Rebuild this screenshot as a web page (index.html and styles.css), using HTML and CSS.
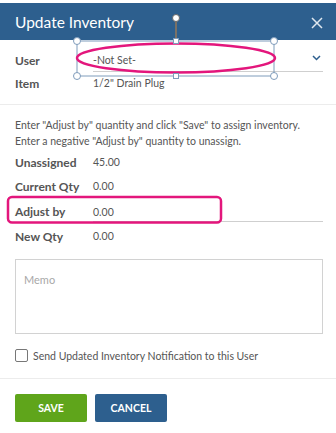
FILE: index.html
```html
<!DOCTYPE html>
<html>
<head>
<meta charset="utf-8">
<link rel="stylesheet" href="styles.css">
</head>
<body>
<div class="modal">
  <div class="header">
    <span class="title">Update Inventory</span>
    <svg class="close" width="12" height="12" viewBox="0 0 12 12"><path d="M1 1L11 11M11 1L1 11" stroke="#dfe7ef" stroke-width="1.5" fill="none"/></svg>
  </div>
  <div class="top">
    <div class="row user-row">
      <span class="label">User</span>
      <div class="field select">
        <span class="value">-Not Set-</span>
        <svg class="chev" width="9" height="6" viewBox="0 0 9 6"><path d="M1 1L4.5 4.5L8 1" stroke="#2d5f8e" stroke-width="1.5" fill="none"/></svg>
      </div>
    </div>
    <div class="row item-row">
      <span class="label">Item</span>
      <span class="value">1/2" Drain Plug</span>
    </div>
  </div>
  <div class="body">
    <p class="instr">Enter "Adjust by" quantity and click "Save" to assign inventory.<br>Enter a negative "Adjust by" quantity to unassign.</p>
    <div class="row qrow"><span class="label">Unassigned</span><span class="value">45.00</span></div>
    <div class="row qrow"><span class="label">Current Qty</span><span class="value">0.00</span></div>
    <div class="row qrow adj"><span class="label">Adjust by</span><div class="field input"><span class="value">0.00</span></div></div>
    <div class="row qrow"><span class="label">New Qty</span><span class="value">0.00</span></div>
    <div class="memo"><span class="ph">Memo</span></div>
    <label class="check"><span class="box"></span><span class="ctext">Send Updated Inventory Notification to this User</span></label>
  </div>
  <div class="footer">
    <button class="btn save">SAVE</button>
    <button class="btn cancel">CANCEL</button>
  </div>
</div>
<svg class="overlay" width="336" height="433" viewBox="0 0 336 433">
  <line x1="176" y1="21" x2="176" y2="41" stroke="#c8843e" stroke-width="1"/>
  <rect x="77" y="41" width="197" height="35" fill="none" stroke="#7f9cbb" stroke-width="1"/>
  <ellipse cx="176" cy="58" rx="99" ry="14.5" fill="none" stroke="#e3167c" stroke-width="2.5"/>
  <circle cx="176" cy="18" r="3.5" fill="#fff" stroke="#666" stroke-width="1"/>
  <circle cx="77" cy="41" r="3.5" fill="#fff" stroke="#7f9cbb" stroke-width="1"/>
  <circle cx="274" cy="41" r="3.5" fill="#fff" stroke="#7f9cbb" stroke-width="1"/>
  <circle cx="77" cy="76" r="3.5" fill="#fff" stroke="#7f9cbb" stroke-width="1"/>
  <circle cx="274" cy="76" r="3.5" fill="#fff" stroke="#7f9cbb" stroke-width="1"/>
  <rect x="173.5" y="38.5" width="5" height="5" fill="#fff" stroke="#7f9cbb" stroke-width="1"/>
  <rect x="173.5" y="73.5" width="5" height="5" fill="#fff" stroke="#7f9cbb" stroke-width="1"/>
  <rect x="8" y="197" width="213" height="25.5" rx="4" fill="none" stroke="#e3167c" stroke-width="2.5"/>
</svg>
</body>
</html>
```
FILE: styles.css
```css
* { box-sizing: border-box; }
html, body { margin: 0; padding: 0; background: #fff; }
body {
  width: 336px;
  height: 433px;
  overflow: hidden;
  position: relative;
  font-family: Lato, "Open Sans", sans-serif;
  color: #555;
}
.modal { padding-top: 3px; }
.header {
  height: 37px;
  background: #2d5f8e;
  display: flex;
  align-items: center;
  justify-content: space-between;
  padding: 0 13px 0 15px;
}
.title { color: #fff; font-size: 15.5px; font-weight: 400; }
.close { display: block; margin-top: 2px; }
.top { padding: 8px 13px 10px 15px; border-bottom: 1px solid #ececec; }
.row { display: flex; align-items: center; }
.label { width: 78px; flex: none; font-size: 12px; font-weight: 700; color: #555; }
.value { font-size: 10.5px; color: #555; }
.user-row { height: 24px; }
.item-row { height: 22px; }
.field { flex: 1; display: flex; align-items: center; border-bottom: 1px solid #cfcfcf; }
.select { height: 24px; justify-content: space-between; padding-right: 2px; }
.select .chev { display: block; margin-bottom: 4px; }
.body { padding: 12px 13px 0 15px; border-bottom: 1px solid #ececec; }
.instr { margin: 0 0 1px; font-size: 10.5px; line-height: 16px; color: #555; white-space: nowrap; }
.qrow { height: 24px; }
.adj { height: 26px; }
.input { height: 20px; margin-top: 2px; }
.memo {
  margin-top: 11px;
  height: 75px;
  border: 1px solid #d2d2d2;
  padding: 8px 8px;
}
.ph { font-size: 11px; color: #a8a8a8; }
.check { display: flex; align-items: center; height: 44px; padding-bottom: 1px; }
.box {
  width: 13px; height: 13px;
  border: 1px solid #777;
  border-radius: 2px;
  margin-right: 5px;
  flex: none;
}
.ctext { font-size: 10.5px; color: #555; }
.footer { padding: 15px 15px 0; display: flex; gap: 8px; }
.btn {
  width: 72px; height: 28px;
  border: none; border-radius: 2px;
  color: #fff;
  font-family: Lato, "Open Sans", sans-serif;
  font-size: 10.5px; font-weight: 700;
  padding: 0;
}
.save { background: #5fa51b; }
.cancel { background: #2d5f8e; }
.overlay { position: absolute; left: 0; top: 0; pointer-events: none; }
```
